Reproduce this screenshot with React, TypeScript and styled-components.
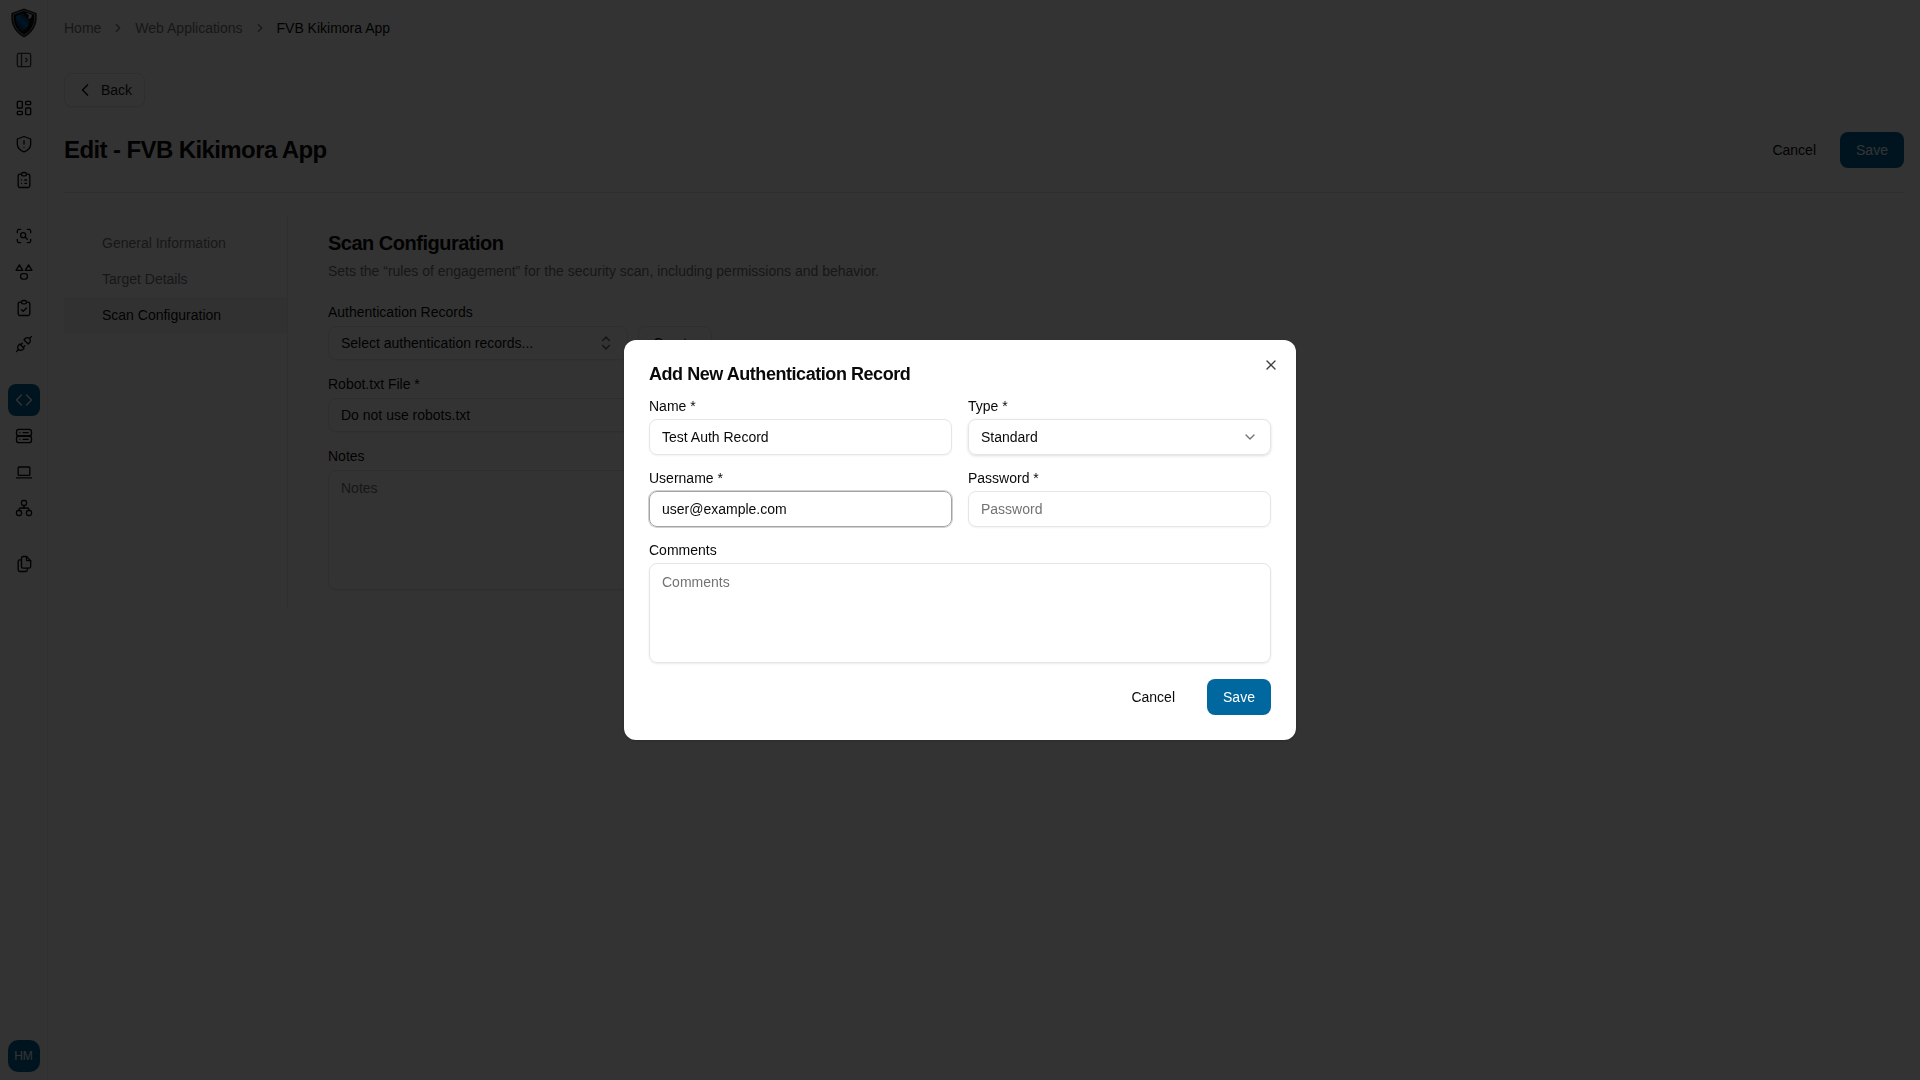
import React from "react";
import styled, { createGlobalStyle } from "styled-components";
import {
  TbLayoutSidebarLeftExpand,
  TbLayoutDashboard,
  TbClipboardList,
  TbZoomScan,
  TbClipboardCheck,
  TbPlugConnected,
  TbServer2,
  TbDeviceLaptop,
  TbSitemap,
  TbFiles,
  TbChevronRight,
  TbChevronLeft,
  TbChevronDown,
  TbSelector,
  TbX,
} from "react-icons/tb";

const GlobalStyle = createGlobalStyle`
  html, body {
    margin: 0;
    padding: 0;
    background: #ffffff;
    font-family: "Liberation Sans", Arial, sans-serif;
    color: #0a0a0a;
  }
  * { box-sizing: border-box; }
`;

const Shell = styled.div`
  display: flex;
  height: 1080px;
  overflow: hidden;
`;

const Sidebar = styled.aside`
  width: 48px;
  flex: none;
  border-right: 1px solid #eeeeee;
  background: #fdfdfd;
  display: flex;
  flex-direction: column;
  align-items: center;
  padding-top: 4px;
`;

const LogoBox = styled.div`
  height: 38px;
  display: flex;
  align-items: center;
  justify-content: center;
`;

const RailGroup = styled.div<{ $top: number }>`
  display: flex;
  flex-direction: column;
  gap: 4px;
  margin-top: ${(p) => p.$top}px;
`;

const RailItem = styled.div<{ $active?: boolean; $muted?: boolean }>`
  width: 32px;
  height: 32px;
  border-radius: 8px;
  display: flex;
  align-items: center;
  justify-content: center;
  font-size: 20px;
  color: ${(p) => (p.$active ? "#ffffff" : p.$muted ? "#404040" : "#0a0a0a")};
  background: ${(p) => (p.$active ? "#00679f" : "transparent")};
  svg { stroke-width: 1.6; }
`;

const Avatar = styled.div`
  width: 32px;
  height: 32px;
  margin-top: auto;
  margin-bottom: 8px;
  border-radius: 10px;
  background: #00679f;
  color: #ffffff;
  font-size: 12px;
  display: flex;
  align-items: center;
  justify-content: center;
`;

const Main = styled.main`
  flex: 1;
  padding: 0 16px;
  min-width: 0;
`;

const Breadcrumb = styled.nav`
  height: 56px;
  display: flex;
  align-items: center;
  gap: 10px;
  font-size: 14px;
  color: #737373;
`;

const Crumb = styled.span<{ $current?: boolean }>`
  color: ${(p) => (p.$current ? "#0a0a0a" : "#737373")};
`;

const BackButton = styled.button`
  margin-top: 17px;
  width: 81px;
  height: 34px;
  border: 1px solid #e5e5e5;
  border-radius: 8px;
  background: #ffffff;
  box-shadow: 0 1px 2px rgba(0, 0, 0, 0.05);
  font: inherit;
  font-size: 14px;
  color: #171717;
  display: flex;
  align-items: center;
  gap: 6px;
  padding: 0 10px;
`;

const Header = styled.header`
  display: flex;
  justify-content: space-between;
  align-items: center;
  height: 36px;
  margin-top: 25px;
`;

const PageTitle = styled.h1`
  margin: 0;
  font-size: 24px;
  line-height: 32px;
  font-weight: 700;
  letter-spacing: -0.6px;
`;

const Actions = styled.div`
  display: flex;
  align-items: center;
  gap: 8px;
`;

const GhostButton = styled.button`
  height: 36px;
  padding: 0 16px;
  border: 0;
  background: transparent;
  border-radius: 8px;
  font: inherit;
  font-size: 14px;
  color: #0a0a0a;
`;

const PrimaryButton = styled.button`
  height: 36px;
  width: 64px;
  border: 0;
  border-radius: 8px;
  background: #00679f;
  color: #ffffff;
  font: inherit;
  font-size: 14px;
`;

const Divider = styled.hr`
  margin: 24px 0 0;
  border: 0;
  border-top: 1px solid #e5e5e5;
`;

const Columns = styled.div`
  display: flex;
  margin-top: 24px;
`;

const SectionNav = styled.div`
  width: 224px;
  height: 392px;
  padding-top: 8px;
  border-right: 1px solid #ececec;
  flex: none;
`;

const NavItem = styled.div<{ $active?: boolean }>`
  height: 36px;
  padding-left: 38px;
  display: flex;
  align-items: center;
  font-size: 14px;
  color: ${(p) => (p.$active ? "#0a0a0a" : "#737373")};
  background: ${(p) => (p.$active ? "#f5f5f5" : "transparent")};
`;

const Form = styled.section`
  width: 672px;
  margin-left: 40px;
  padding-top: 12px;
`;

const SectionTitle = styled.h2`
  margin: 0;
  font-size: 20px;
  line-height: 28px;
  font-weight: 700;
  letter-spacing: -0.5px;
`;

const SectionHint = styled.p`
  margin: 4px 0 0;
  font-size: 14px;
  line-height: 20px;
  color: #737373;
`;

const BgLabel = styled.div<{ $top: number }>`
  margin-top: ${(p) => p.$top}px;
  font-size: 14px;
  line-height: 20px;
  color: #0a0a0a;
`;

const BgRow = styled.div`
  display: flex;
  gap: 10px;
  margin-top: 4px;
`;

const BgSelect = styled.div<{ $w: number }>`
  width: ${(p) => p.$w}px;
  height: 34px;
  border: 1px solid #e5e5e5;
  border-radius: 8px;
  padding: 0 11px 0 12px;
  display: flex;
  align-items: center;
  justify-content: space-between;
  font-size: 14px;
  color: #0a0a0a;
  box-shadow: 0 1px 2px rgba(0, 0, 0, 0.05);
`;

const CreateButton = styled(BgSelect)`
  padding-left: 14px;
`;

const BgArea = styled.div`
  height: 120px;
  margin-top: 4px;
  border: 1px solid #e5e5e5;
  border-radius: 8px;
  padding: 7px 12px;
  font-size: 14px;
  line-height: 20px;
  color: #737373;
  box-shadow: 0 1px 2px rgba(0, 0, 0, 0.05);
`;

const Overlay = styled.div`
  position: fixed;
  inset: 0;
  background: rgba(0, 0, 0, 0.8);
  display: flex;
  align-items: center;
  justify-content: center;
`;

const Modal = styled.div`
  position: relative;
  width: 672px;
  height: 400px;
  padding: 25px;
  border-radius: 12px;
  background: #ffffff;
  box-shadow: 0 1px 3px rgba(0, 0, 0, 0.2);
`;

const CloseButton = styled.button`
  position: absolute;
  top: 17px;
  right: 17px;
  width: 16px;
  height: 16px;
  padding: 0;
  border: 0;
  background: transparent;
  color: #404040;
  font-size: 16px;
  display: flex;
  align-items: center;
  justify-content: center;
`;

const ModalTitle = styled.h2`
  margin: 0;
  font-size: 18px;
  line-height: 18px;
  font-weight: 700;
  letter-spacing: -0.45px;
`;

const FieldGrid = styled.div`
  display: grid;
  grid-template-columns: 1fr 1fr;
  column-gap: 16px;
  row-gap: 14px;
  margin-top: 14px;
`;

const Field = styled.div<{ $wide?: boolean }>`
  display: flex;
  flex-direction: column;
  gap: 4px;
  grid-column: ${(p) => (p.$wide ? "1 / -1" : "auto")};
`;

const Label = styled.label`
  font-size: 14px;
  line-height: 18px;
  color: #0a0a0a;
`;

const Input = styled.div<{ $focused?: boolean; $muted?: boolean }>`
  height: 36px;
  padding: 0 12px;
  border: 1px solid ${(p) => (p.$focused ? "#a3a3a3" : "#e5e5e5")};
  border-radius: 8px;
  display: flex;
  align-items: center;
  justify-content: space-between;
  font-size: 14px;
  color: ${(p) => (p.$muted ? "#737373" : "#0a0a0a")};
  box-shadow: ${(p) =>
    p.$focused ? "0 0 0 1px rgba(163, 163, 163, 0.5)" : "0 1px 2px rgba(0, 0, 0, 0.05)"};
`;

const SelectInput = styled(Input)`
  box-shadow: 0 1px 3px rgba(0, 0, 0, 0.14);
  color: #0a0a0a;
  svg { color: #737373; font-size: 16px; }
`;

const TextArea = styled.div`
  height: 100px;
  padding: 8px 12px;
  border: 1px solid #e5e5e5;
  border-radius: 8px;
  font-size: 14px;
  line-height: 20px;
  color: #737373;
  box-shadow: 0 1px 2px rgba(0, 0, 0, 0.08);
`;

const ModalFooter = styled.div`
  display: flex;
  justify-content: flex-end;
  align-items: center;
  gap: 16px;
  margin-top: 16px;
`;

const ShieldIcon = () => (
  <svg width="20" height="20" viewBox="0 0 24 24" fill="none" stroke="currentColor" strokeLinecap="round" strokeLinejoin="round">
    <path d="M12 3l8 3v6c0 5-3.500 8-8 9.500-4.500-1.500-8-4.500-8-9.500V6z" />
    <path d="M12 8v4" />
    <path d="M12 16v.01" />
  </svg>
);

const CodeIcon = () => (
  <svg width="20" height="20" viewBox="0 0 24 24" fill="none" stroke="currentColor" strokeLinecap="round" strokeLinejoin="round">
    <path d="M9 6l-6 6 6 6" />
    <path d="M15 6l6 6-6 6" />
  </svg>
);

const ShapesIcon = () => (
  <svg width="20" height="20" viewBox="0 0 24 24" fill="none" stroke="currentColor" strokeLinecap="round" strokeLinejoin="round">
    <path d="M6.500 3.500l4 6.500h-8z" />
    <path d="M17.500 3.500l4 6.500h-8z" />
    <rect x="8" y="14" width="8" height="6.500" rx="2.500" />
  </svg>
);

const Logo = () => (
  <svg width="28" height="30" viewBox="0 0 28 30">
    <defs>
      <linearGradient id="logoBlue" x1="0.2" y1="0.9" x2="0.8" y2="0.1">
        <stop offset="0" stopColor="#04243c" />
        <stop offset="0.5" stopColor="#0a6cb0" />
        <stop offset="1" stopColor="#04243c" />
      </linearGradient>
    </defs>
    <path d="M14 .5L26.500 5C27.500 13 26 23 14 29.500 2 23 .5 13 1.500 5z" fill="#222222" />
    <path d="M14 2.500L24.500 6.200C25 13 24 21.500 14 27.300 4 21.500 3 13 3.500 6.200z" fill="#0a0d10" stroke="#8a8a8a" />
    <path d="M13 5L6 8C5.500 13 7 19 12 23.500L17 20 20 13 16 9z" fill="url(#logoBlue)" />
    <path d="M16 4.500L22 7 21 10 18 11 19 7.500z" fill="#d9d9d9" />
  </svg>
);

export default function App() {
  return (
    <>
      <GlobalStyle />
      <Shell>
        <Sidebar>
          <LogoBox>
            <Logo />
          </LogoBox>
          <RailGroup $top={2}>
            <RailItem $muted><TbLayoutSidebarLeftExpand /></RailItem>
          </RailGroup>
          <RailGroup $top={16}>
            <RailItem><TbLayoutDashboard /></RailItem>
            <RailItem><ShieldIcon /></RailItem>
            <RailItem><TbClipboardList /></RailItem>
          </RailGroup>
          <RailGroup $top={24}>
            <RailItem><TbZoomScan /></RailItem>
            <RailItem><ShapesIcon /></RailItem>
            <RailItem><TbClipboardCheck /></RailItem>
            <RailItem><TbPlugConnected /></RailItem>
          </RailGroup>
          <RailGroup $top={24}>
            <RailItem $active><CodeIcon /></RailItem>
            <RailItem><TbServer2 /></RailItem>
            <RailItem><TbDeviceLaptop /></RailItem>
            <RailItem><TbSitemap /></RailItem>
          </RailGroup>
          <RailGroup $top={24}>
            <RailItem><TbFiles /></RailItem>
          </RailGroup>
          <Avatar>HM</Avatar>
        </Sidebar>
        <Main>
          <Breadcrumb>
            <Crumb>Home</Crumb>
            <TbChevronRight size={14} />
            <Crumb>Web Applications</Crumb>
            <TbChevronRight size={14} />
            <Crumb $current>FVB Kikimora App</Crumb>
          </Breadcrumb>
          <BackButton>
            <TbChevronLeft size={20} />
            Back
          </BackButton>
          <Header>
            <PageTitle>Edit - FVB Kikimora App</PageTitle>
            <Actions>
              <GhostButton>Cancel</GhostButton>
              <PrimaryButton>Save</PrimaryButton>
            </Actions>
          </Header>
          <Divider />
          <Columns>
            <SectionNav>
              <NavItem>General Information</NavItem>
              <NavItem>Target Details</NavItem>
              <NavItem $active>Scan Configuration</NavItem>
            </SectionNav>
            <Form>
              <SectionTitle>Scan Configuration</SectionTitle>
              <SectionHint>
                Sets the “rules of engagement” for the security scan, including permissions and behavior.
              </SectionHint>
              <BgLabel $top={21}>Authentication Records</BgLabel>
              <BgRow>
                <BgSelect $w={300}>
                  Select authentication records...
                  <TbSelector size={20} color="#737373" />
                </BgSelect>
                <CreateButton $w={74}>Create</CreateButton>
              </BgRow>
              <BgLabel $top={14}>Robot.txt File *</BgLabel>
              <BgRow>
                <BgSelect $w={672}>Do not use robots.txt</BgSelect>
              </BgRow>
              <BgLabel $top={14}>Notes</BgLabel>
              <BgArea>Notes</BgArea>
            </Form>
          </Columns>
        </Main>
      </Shell>
      <Overlay>
        <Modal>
          <CloseButton aria-label="Close"><TbX /></CloseButton>
          <ModalTitle>Add New Authentication Record</ModalTitle>
          <FieldGrid>
            <Field>
              <Label>Name *</Label>
              <Input>Test Auth Record</Input>
            </Field>
            <Field>
              <Label>Type *</Label>
              <SelectInput>
                Standard
                <TbChevronDown />
              </SelectInput>
            </Field>
            <Field>
              <Label>Username *</Label>
              <Input $focused>user@example.com</Input>
            </Field>
            <Field>
              <Label>Password *</Label>
              <Input $muted>Password</Input>
            </Field>
            <Field $wide>
              <Label>Comments</Label>
              <TextArea>Comments</TextArea>
            </Field>
          </FieldGrid>
          <ModalFooter>
            <GhostButton>Cancel</GhostButton>
            <PrimaryButton>Save</PrimaryButton>
          </ModalFooter>
        </Modal>
      </Overlay>
    </>
  );
}
